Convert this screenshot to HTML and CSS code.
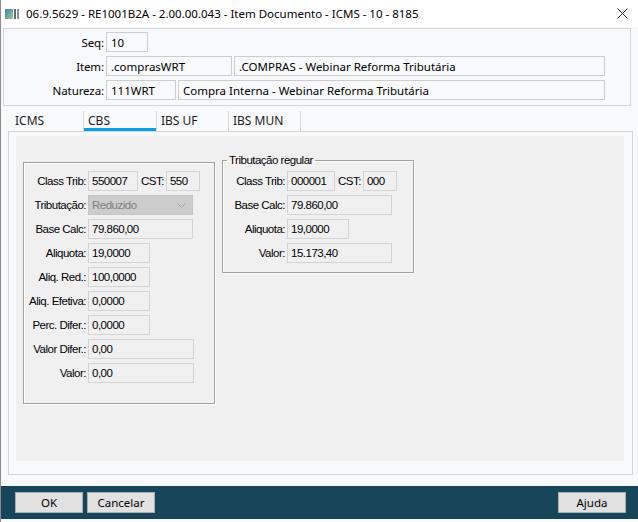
FILE: index.html
```html
<!DOCTYPE html>
<html lang="pt-BR">
<head>
    <meta charset="UTF-8">
    <meta name="viewport" content="width=device-width, initial-scale=1.0">
    <title>Item Documento - ICMS</title>
    <link rel="stylesheet" href="styles.css">
</head>
<body>
    <div class="window">
        <div class="titlebar">
            <svg class="app-icon" width="14" height="10" viewBox="0 0 14 10">
                <defs>
                    <linearGradient id="ig" x1="0" y1="0" x2="1" y2="1">
                        <stop offset="0" stop-color="#3d7fb0"/>
                        <stop offset="1" stop-color="#9ccf8c"/>
                    </linearGradient>
                </defs>
                <rect x="0" y="0" width="8" height="10" fill="url(#ig)"/>
                <rect x="9" y="0" width="2" height="10" fill="#5f6b75"/>
                <rect x="12" y="0" width="2" height="10" fill="#8a949c"/>
            </svg>
            <span class="title">06.9.5629 - RE1001B2A - 2.00.00.043 - Item Documento - ICMS - 10 - 8185</span>
            <svg class="close-btn" width="11" height="11" viewBox="0 0 11 11">
                <path d="M0.5 0.5 L10.5 10.5 M10.5 0.5 L0.5 10.5" stroke="#222" stroke-width="1" fill="none"/>
            </svg>
        </div>

        <div class="header">
            <div class="hrow">
                <label class="hlabel">Seq:</label>
                <input class="hinput w-seq" value="10" readonly>
            </div>
            <div class="hrow">
                <label class="hlabel">Item:</label>
                <input class="hinput w-item" value=".comprasWRT" readonly>
                <input class="hinput w-item-desc" value=".COMPRAS - Webinar Reforma Tributária" readonly>
            </div>
            <div class="hrow">
                <label class="hlabel">Natureza:</label>
                <input class="hinput w-nat" value="111WRT" readonly>
                <input class="hinput w-nat-desc" value="Compra Interna - Webinar Reforma Tributária" readonly>
            </div>
        </div>

        <div class="tabs">
            <div class="tab tab-first">ICMS</div>
            <div class="tab active">CBS</div>
            <div class="tab">IBS UF</div>
            <div class="tab tab-last">IBS MUN</div>
        </div>

        <div class="tab-page">
            <div class="page-inner">
                <fieldset class="group group-cbs">
                    <div class="frow">
                        <span class="flabel">Class Trib:</span>
                        <div class="fcell">
                            <input class="field w-class" value="550007" readonly>
                            <span class="inline-label">CST:</span>
                            <input class="field w-cst" value="550" readonly>
                        </div>
                    </div>
                    <div class="frow">
                        <span class="flabel">Tributação:</span>
                        <div class="fcell">
                            <div class="combo w-long">
                                <span>Reduzido</span>
                                <svg width="9" height="5" viewBox="0 0 9 5">
                                    <path d="M0.5 0.5 L4.5 4.5 L8.5 0.5" stroke="#a5a5a5" fill="none"/>
                                </svg>
                            </div>
                        </div>
                    </div>
                    <div class="frow">
                        <span class="flabel">Base Calc:</span>
                        <div class="fcell"><input class="field w-long" value="79.860,00" readonly></div>
                    </div>
                    <div class="frow">
                        <span class="flabel">Aliquota:</span>
                        <div class="fcell"><input class="field w-short" value="19,0000" readonly></div>
                    </div>
                    <div class="frow">
                        <span class="flabel">Aliq. Red.:</span>
                        <div class="fcell"><input class="field w-short" value="100,0000" readonly></div>
                    </div>
                    <div class="frow">
                        <span class="flabel">Aliq. Efetiva:</span>
                        <div class="fcell"><input class="field w-short" value="0,0000" readonly></div>
                    </div>
                    <div class="frow">
                        <span class="flabel">Perc. Difer.:</span>
                        <div class="fcell"><input class="field w-short" value="0,0000" readonly></div>
                    </div>
                    <div class="frow">
                        <span class="flabel">Valor Difer.:</span>
                        <div class="fcell"><input class="field w-wide" value="0,00" readonly></div>
                    </div>
                    <div class="frow">
                        <span class="flabel">Valor:</span>
                        <div class="fcell"><input class="field w-wide" value="0,00" readonly></div>
                    </div>
                </fieldset>

                <fieldset class="group group-regular">
                    <legend>Tributação regular</legend>
                    <div class="frow">
                        <span class="flabel">Class Trib:</span>
                        <div class="fcell">
                            <input class="field w-class-r" value="000001" readonly>
                            <span class="inline-label">CST:</span>
                            <input class="field w-cst" value="000" readonly>
                        </div>
                    </div>
                    <div class="frow">
                        <span class="flabel">Base Calc:</span>
                        <div class="fcell"><input class="field w-long" value="79.860,00" readonly></div>
                    </div>
                    <div class="frow">
                        <span class="flabel">Aliquota:</span>
                        <div class="fcell"><input class="field w-short" value="19,0000" readonly></div>
                    </div>
                    <div class="frow">
                        <span class="flabel">Valor:</span>
                        <div class="fcell"><input class="field w-long" value="15.173,40" readonly></div>
                    </div>
                </fieldset>
            </div>
        </div>

        <div class="footer">
            <button class="btn">OK</button>
            <button class="btn">Cancelar</button>
            <span class="spacer"></span>
            <button class="btn">Ajuda</button>
        </div>
    </div>
</body>
</html>
```

FILE: styles.css
```css
* {
    box-sizing: border-box;
}
body {
    margin: 0;
    background-color: #e6e6e6;
    font-family: "Noto Sans", "Open Sans", sans-serif;
    font-size: 11.5px;
    color: #000;
}
.window {
    width: 638px;
    height: 522px;
    background-color: #f8f9fa;
    border-left: 1px solid #8c8c8c;
    display: flex;
    flex-direction: column;
}
.titlebar {
    height: 27px;
    background-color: #fff;
    display: flex;
    align-items: center;
    padding-left: 4px;
    flex-shrink: 0;
}
.app-icon {
    margin-right: 7px;
}
.title {
    flex-grow: 1;
    font-size: 11.5px;
    white-space: nowrap;
}
.close-btn {
    margin-right: 10px;
}

/* top fields */
.header {
    width: 628px;
    height: 78px;
    margin: 1px 0 0 2px;
    border: 1px solid #d5d5d5;
    padding-top: 3px;
    display: flex;
    flex-direction: column;
    gap: 4px;
}
.hrow {
    display: flex;
    align-items: center;
    gap: 2px;
    height: 20px;
}
.hlabel {
    width: 100px;
    text-align: right;
    letter-spacing: -0.1px;
}
.hinput {
    height: 20px;
    border: 1px solid #cdcdcd;
    background-color: #f8f9fa;
    font: inherit;
    padding: 0 0 0 4px;
    color: #000;
    outline: none;
}
.w-seq { width: 42px; }
.w-item { width: 126px; }
.w-item-desc { width: 371px; }
.w-nat { width: 70px; }
.w-nat-desc { width: 427px; }

/* tabs */
.tabs {
    height: 25px;
    margin-left: 7px;
    display: flex;
    align-items: flex-end;
}
.tab {
    height: 20px;
    border-left: 1px solid #d5d5d5;
    padding: 2px 0 0 4px;
    line-height: 15px;
    font-size: 12px;
    color: #1e1e1e;
}
.tab-first {
    width: 75px;
    border-left: none;
    padding-left: 7px;
}
.tab.active {
    width: 73px;
    box-shadow: inset 0 -3px 0 #0ba1e2;
}
.tab:nth-child(3) { width: 72px; }
.tab-last {
    width: 73px;
    border-right: 1px solid #d5d5d5;
}

.tab-page {
    width: 625px;
    height: 344px;
    margin-left: 7px;
    border: 1px solid #d5d5d5;
    padding: 4px 8px 13px 7px;
}
.page-inner {
    height: 100%;
    background-color: #f0f0f0;
    padding: 17px 7px;
    display: flex;
    align-items: flex-start;
    gap: 7px;
    font-family: "Liberation Sans", Arial, sans-serif;
    font-size: 11.5px;
    letter-spacing: -0.5px;
}

/* group boxes */
.group {
    width: 192px;
    margin: 0;
    min-width: 0;
    border: 1px solid #a0a0a0;
    box-shadow: 1px 1px 0 #fff, inset 1px 1px 0 #fff;
    display: flex;
    flex-direction: column;
    gap: 4px;
}
.group-cbs {
    margin-top: 9px;
    padding: 8px 0 20px 0;
}
.group-regular {
    padding: 4px 0 9px 0;
}
.group legend {
    margin-left: 4px;
    padding: 0 2px;
    line-height: 14px;
}
.frow {
    display: flex;
    align-items: center;
    gap: 2px;
    height: 20px;
}
.flabel {
    width: 62px;
    text-align: right;
    white-space: nowrap;
}
.fcell {
    display: flex;
    align-items: center;
}
.inline-label {
    margin: 0 2px 0 3px;
}
.field {
    height: 20px;
    border: 1px solid #d4d4d4;
    background-color: #f0f0f0;
    font: inherit;
    letter-spacing: inherit;
    color: #000;
    padding: 0 0 0 3px;
    outline: none;
}
.combo {
    height: 20px;
    border: 1px solid #c4c4c4;
    background-color: #cccccc;
    color: #7f7f7f;
    display: flex;
    align-items: center;
    justify-content: space-between;
    padding: 0 6px 0 3px;
}
.w-class { width: 50px; }
.w-class-r { width: 48px; }
.w-cst { width: 34px; }
.w-long { width: 105px; }
.w-short { width: 62px; }
.w-wide { width: 106px; }

/* bottom bar */
.footer {
    height: 33px;
    margin-top: 11px;
    background-color: #17465a;
    display: flex;
    align-items: center;
    gap: 4px;
    padding: 0 12px 0 14px;
}
.spacer {
    flex-grow: 1;
}
.btn {
    width: 68px;
    height: 21px;
    background-color: #e1e1e1;
    border: 1px solid #adadad;
    font-family: "Noto Sans", "Open Sans", sans-serif;
    font-size: 11.5px;
    color: #000;
    padding: 0;
}
```
